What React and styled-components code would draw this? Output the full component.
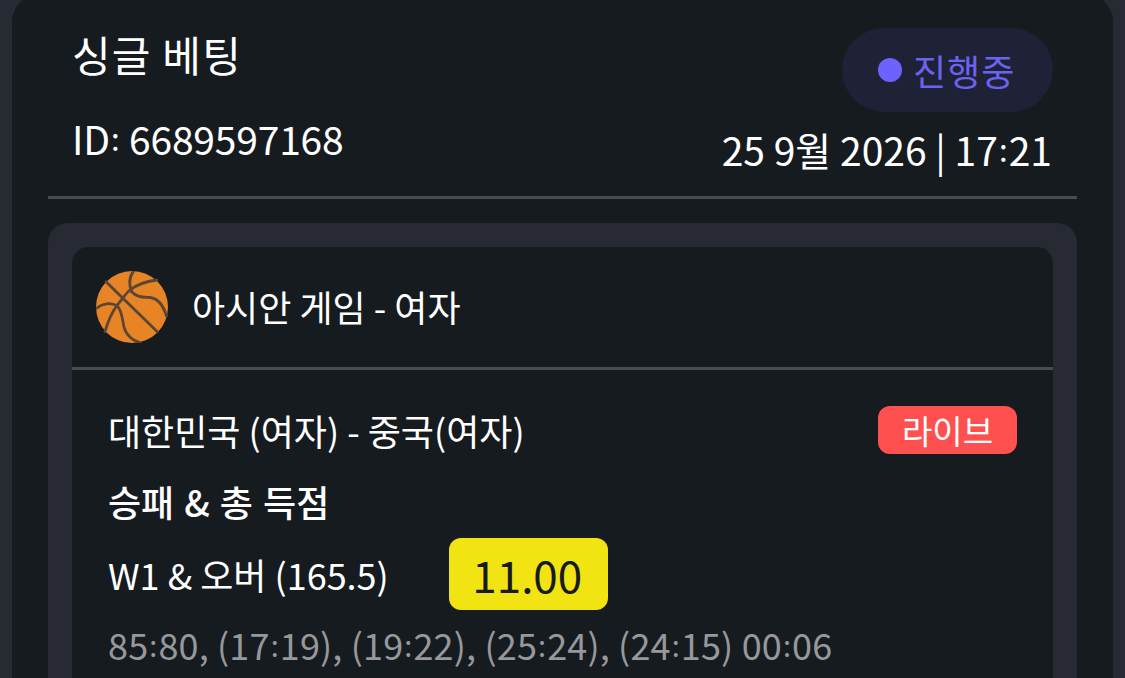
import React from "react";
import styled, { createGlobalStyle } from "styled-components";

const Global = createGlobalStyle`
  html, body { margin: 0; padding: 0; height: 100%; background: #272a33; overflow: hidden; }
  body { font-family: "Noto Sans CJK KR", "Noto Sans", sans-serif; font-weight: 400; }
  #root { height: 678px; overflow: hidden; }
`;

const Page = styled.div`
  padding: 0 12px;
  height: 678px;
  overflow: hidden;
`;
const Card = styled.main`
  margin-top: -6px;
  background: #161b20;
  border-radius: 28px;
  padding: 6px 36px 40px;
  min-height: 800px;
  box-sizing: border-box;
`;
const Header = styled.header`
  display: flex;
  justify-content: space-between;
  border-bottom: 3px solid #4a4b4b;
  height: 199px;
  box-sizing: border-box;
  padding: 28px 26px 0 25px;
`;
const TitleCol = styled.div`
  display: flex;
  flex-direction: column;
  color: #fff;
`;
const Title = styled.h1`
  margin: 0 0 0 -1px;
  font-size: 42px;
  font-weight: 400;
  line-height: 52px;
  letter-spacing: 1.2px;
`;
const BetId = styled.div`
  margin-top: 32px;
  margin-left: -1px;
  font-size: 39px;
  line-height: 52px;
  letter-spacing: -0.2px;
`;
const MetaCol = styled.div`
  display: flex;
  flex-direction: column;
  align-items: flex-end;
`;
const StatusPill = styled.div`
  display: flex;
  align-items: center;
  gap: 11px;
  width: 211px;
  height: 84px;
  margin-right: -2px;
  box-sizing: border-box;
  padding-left: 36px;
  border-radius: 42px;
  background: #1f2136;
  color: #6b63f0;
  font-size: 36px;
  letter-spacing: 1px;
`;
const Dot = styled.span`
  width: 24px;
  height: 24px;
  border-radius: 50%;
  background: #6c63ff;
`;
const DateText = styled.div`
  margin-top: 11px;
  margin-right: -1px;
  color: #fff;
  font-size: 39px;
  line-height: 52px;
`;
const Panel = styled.section`
  margin-top: 24px;
  background: #272a33;
  border-radius: 20px;
  padding: 24px;
`;
const Inner = styled.div`
  background: #161b20;
  border-radius: 16px;
  min-height: 500px;
`;
const League = styled.div`
  display: flex;
  align-items: center;
  gap: 24px;
  height: 123px;
  box-sizing: border-box;
  padding-left: 24px;
  border-bottom: 3px solid #4a4b4b;
  color: #fff;
  font-size: 36px;
`;
const LeagueName = styled.span`
  line-height: 50px;
  margin-bottom: 3px;
`;
const Body = styled.div`
  padding: 36px 36px 0 36px;
`;
const MatchRow = styled.div`
  display: flex;
  justify-content: space-between;
  align-items: center;
  color: #fff;
  font-size: 36px;
  height: 48px;
`;
const LiveTag = styled.span`
  display: flex;
  align-items: center;
  justify-content: center;
  width: 139px;
  height: 48px;
  border-radius: 12px;
  background: #ff5050;
  color: #fff;
  font-size: 33px;
`;
const Market = styled.div`
  margin-top: 22px;
  color: #fff;
  font-size: 36px;
  font-weight: 500;
  line-height: 50px;
  word-spacing: 2px;
`;
const PickRow = styled.div`
  display: flex;
  align-items: center;
  margin-top: 12px;
  gap: 60px;
  color: #fff;
  font-size: 36px;
`;
const Odds = styled.span`
  display: flex;
  align-items: center;
  justify-content: center;
  width: 159px;
  height: 72px;
  box-sizing: border-box;
  padding-right: 2px;
  border-radius: 12px;
  background: #f2e313;
  color: #161b20;
  font-size: 44px;
  font-weight: 400;
`;
const Score = styled.div`
  margin-top: 10px;
  color: #96989b;
  font-size: 36px;
  line-height: 48px;
  letter-spacing: 0.15px;
`;
const Colon = styled.span`
  font-size: 0.8em;
  vertical-align: 0.12em;
  margin: 0 0.035em;
`;

const Clock = ({ text }) => (
  <>
    {text.split(":").map((part, i) => (
      <React.Fragment key={i}>
        {i > 0 && <Colon>:</Colon>}
        {part}
      </React.Fragment>
    ))}
  </>
);

const Ball = () => (
  <svg width="72" height="72" viewBox="0 0 72 72" fill="none" stroke="#5a4632" strokeWidth="2.8" strokeLinecap="round" strokeLinejoin="round">
    <circle cx="36" cy="36" r="36" fill="#e78426" stroke="none" />
    <path d="M10 10.7L61.3 60.7" />
    <path d="M37.3 0.5C33.5 6 32.5 13 35.7 20.7" />
    <path d="M60.7 9C50 10.5 40 14 34 19C30 22 25 30 21.3 34C16 41 12 50 9 60.7" />
    <path d="M0.5 37.3C6 32.5 15 31 21.3 35C26 39 26.5 50 28 56C30 64 37 70 44 71.5" />
    <path d="M35.7 20.7C41 26.5 47 26 54 26.5C62 27.5 67.5 35 70.5 45" />
  </svg>
);

export default function App() {
  return (
    <Page>
      <Global />
      <Card>
        <Header>
          <TitleCol>
            <Title>싱글 베팅</Title>
            <BetId><Clock text="ID: 6689597168" /></BetId>
          </TitleCol>
          <MetaCol>
            <StatusPill><Dot />진행중</StatusPill>
            <DateText><Clock text="25 9월 2026 | 17:21" /></DateText>
          </MetaCol>
        </Header>
        <Panel>
          <Inner>
            <League><Ball /><LeagueName>아시안 게임 - 여자</LeagueName></League>
            <Body>
              <MatchRow>대한민국 (여자) - 중국(여자)<LiveTag>라이브</LiveTag></MatchRow>
              <Market>승패 &amp; 총 득점</Market>
              <PickRow>W1 &amp; 오버 (165.5)<Odds>11.00</Odds></PickRow>
              <Score><Clock text="85:80, (17:19), (19:22), (25:24), (24:15) 00:06" /></Score>
            </Body>
          </Inner>
        </Panel>
      </Card>
    </Page>
  );
}
